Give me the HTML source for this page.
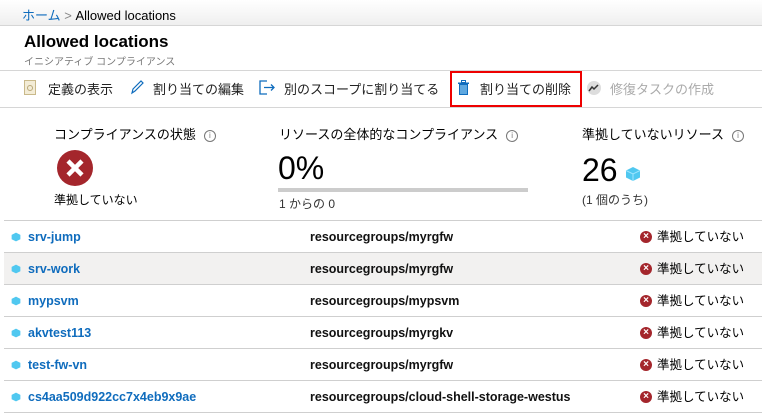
<!DOCTYPE html>
<html><head><meta charset="utf-8"><style>
body{margin:0;width:762px;height:410px;overflow:hidden;background:#fff;font-family:"Liberation Sans","Noto Sans CJK JP",sans-serif;color:#000;position:relative}
.a{position:absolute;white-space:nowrap}
.hl{position:absolute;left:0;width:762px;height:1px;background:#d6d6d6}
.row{position:absolute;left:4px;width:758px;height:31px;border-bottom:1px solid #cfcfcf;line-height:16px}
.nm{position:absolute;left:24px;top:8px;color:#0f6cbd;font-weight:bold;font-size:12.5px}
.rg{position:absolute;left:306px;top:8px;font-weight:bold;font-size:12.5px;color:#111}
.st{position:absolute;left:636px;top:8px;font-size:12.5px;line-height:16px;height:16px}
.xi{display:inline-block;width:12px;height:12px;border-radius:50%;background:#a4262c;color:#fff;font-size:10px;line-height:12px;text-align:center;font-weight:bold;vertical-align:top;margin-top:2px;margin-right:5px;font-family:"Liberation Sans",sans-serif}
.cube{position:absolute;left:7px;top:11px;width:10px;height:10px}
.tb{font-size:13px;color:#222;top:79px}
.info{display:inline-block;width:10px;height:10px;border:1px solid #777;border-radius:50%;font-size:8px;line-height:10px;text-align:center;color:#777;margin-left:8px;vertical-align:1px}
</style></head><body>
<div class="a" style="left:0;top:0;width:762px;height:25px;background:linear-gradient(#fff,#efefef)"></div>
<div class="a" style="left:22px;top:5px;font-size:13px"><span style="color:#0f6cbd">ホーム</span> <span style="color:#888">&gt;</span> Allowed locations</div>
<div class="hl" style="top:25px"></div>
<div class="a" style="left:24px;top:32px;font-size:17px;font-weight:bold">Allowed locations</div>
<div class="a" style="left:24px;top:53px;font-size:10px;color:#777">イニシアティブ コンプライアンス</div>
<div class="hl" style="top:70px"></div>
<svg class="a" style="left:24px;top:80px" width="13" height="16"><rect x="0.5" y="0.5" width="11" height="14" fill="#f3ecd6" stroke="#c9b98a"/><circle cx="6" cy="8" r="2.5" fill="none" stroke="#b9a878"/></svg>
<div class="a tb" style="left:48px">定義の表示</div>
<svg class="a" style="left:130px;top:80px" width="14" height="15"><path d="M2 13 L3 9 L11 1 L13 3 L5 11 Z" fill="none" stroke="#0f6cbd" stroke-width="1.2"/></svg>
<div class="a tb" style="left:153px">割り当ての編集</div>
<svg class="a" style="left:259px;top:80px" width="17" height="15"><path d="M8 1 H1 V14 H8" fill="none" stroke="#0f6cbd" stroke-width="1.3"/><path d="M5 7.5 H15 M12 4.5 L15 7.5 L12 10.5" fill="none" stroke="#0f6cbd" stroke-width="1.3"/></svg>
<div class="a tb" style="left:284px">別のスコープに割り当てる</div>
<div class="a" style="left:450px;top:71px;width:128px;height:32px;border:2.5px solid #e00"></div>
<svg class="a" style="left:458px;top:80px" width="12" height="16"><rect x="3.5" y="0.5" width="4" height="2" fill="none" stroke="#0f6cbd"/><rect x="0" y="2.5" width="11" height="1.5" fill="#0f6cbd"/><rect x="1.5" y="4.5" width="8" height="10" fill="#5ea8e0" stroke="#0f6cbd"/></svg>
<div class="a tb" style="left:480px">割り当ての削除</div>
<svg class="a" style="left:587px;top:81px" width="14" height="14"><circle cx="7" cy="7" r="7" fill="#ddd"/><path d="M2 10 L5 6 L7 8 L11 4" fill="none" stroke="#333" stroke-width="1.5"/></svg>
<div class="a tb" style="left:610px;color:#aaa">修復タスクの作成</div>
<div class="hl" style="top:107px"></div>
<div class="a" style="left:54px;top:124px;font-size:13px">コンプライアンスの状態<span class="info">i</span></div>
<div class="a" style="left:57px;top:150px;width:36px;height:36px;border-radius:50%;background:#a4262c"></div>
<svg class="a" style="left:57px;top:150px" width="36" height="36"><path d="M11 11 L25 25 M25 11 L11 25" stroke="#fff" stroke-width="4.5"/></svg>
<div class="a" style="left:54px;top:191px;font-size:12px">準拠していない</div>
<div class="a" style="left:279px;top:124px;font-size:13px">リソースの全体的なコンプライアンス<span class="info">i</span></div>
<div class="a" style="left:278px;top:150px;font-size:32px;line-height:36px">0%</div>
<div class="a" style="left:278px;top:188px;width:250px;height:4px;background:#ccc"></div>
<div class="a" style="left:279px;top:195px;font-size:12px;color:#333">1 からの 0</div>
<div class="a" style="left:582px;top:124px;font-size:13px">準拠していないリソース<span class="info">i</span></div>
<div class="a" style="left:582px;top:152px;font-size:32px;line-height:36px">26</div>
<svg class="a" style="left:625px;top:166px;width:16px;height:16px" viewBox="0 0 16 16"><path d="M8 1 L15 4.5 L15 11.5 L8 15 L1 11.5 L1 4.5 Z" fill="#50c8f0"/><path d="M1 4.5 L8 8 L15 4.5 M8 8 V15" fill="none" stroke="#a0e6ff" stroke-width="1"/></svg>
<div class="a" style="left:582px;top:191px;font-size:12px;color:#333">(1 個のうち)</div>
<div class="hl" style="top:220px;left:4px;background:#cfcfcf"></div>

<div class="row" style="top:221px"><svg class="cube" viewBox="0 0 16 16"><path d="M8 1 L15 4.5 L15 11.5 L8 15 L1 11.5 L1 4.5 Z" fill="#50c8f0"/></svg><span class="nm">srv-jump</span><span class="rg">resourcegroups/myrgfw</span><span class="st"><span class="xi">×</span>準拠していない</span></div>
<div class="row" style="top:253px;background:#f2f1f0"><svg class="cube" viewBox="0 0 16 16"><path d="M8 1 L15 4.5 L15 11.5 L8 15 L1 11.5 L1 4.5 Z" fill="#50c8f0"/></svg><span class="nm">srv-work</span><span class="rg">resourcegroups/myrgfw</span><span class="st"><span class="xi">×</span>準拠していない</span></div>
<div class="row" style="top:285px"><svg class="cube" viewBox="0 0 16 16"><path d="M8 1 L15 4.5 L15 11.5 L8 15 L1 11.5 L1 4.5 Z" fill="#50c8f0"/></svg><span class="nm">mypsvm</span><span class="rg">resourcegroups/mypsvm</span><span class="st"><span class="xi">×</span>準拠していない</span></div>
<div class="row" style="top:317px"><svg class="cube" viewBox="0 0 16 16"><path d="M8 1 L15 4.5 L15 11.5 L8 15 L1 11.5 L1 4.5 Z" fill="#50c8f0"/></svg><span class="nm">akvtest113</span><span class="rg">resourcegroups/myrgkv</span><span class="st"><span class="xi">×</span>準拠していない</span></div>
<div class="row" style="top:349px"><svg class="cube" viewBox="0 0 16 16"><path d="M8 1 L15 4.5 L15 11.5 L8 15 L1 11.5 L1 4.5 Z" fill="#50c8f0"/></svg><span class="nm">test-fw-vn</span><span class="rg">resourcegroups/myrgfw</span><span class="st"><span class="xi">×</span>準拠していない</span></div>
<div class="row" style="top:381px"><svg class="cube" viewBox="0 0 16 16"><path d="M8 1 L15 4.5 L15 11.5 L8 15 L1 11.5 L1 4.5 Z" fill="#50c8f0"/></svg><span class="nm">cs4aa509d922cc7x4eb9x9ae</span><span class="rg">resourcegroups/cloud-shell-storage-westus</span><span class="st"><span class="xi">×</span>準拠していない</span></div>
</body></html>
